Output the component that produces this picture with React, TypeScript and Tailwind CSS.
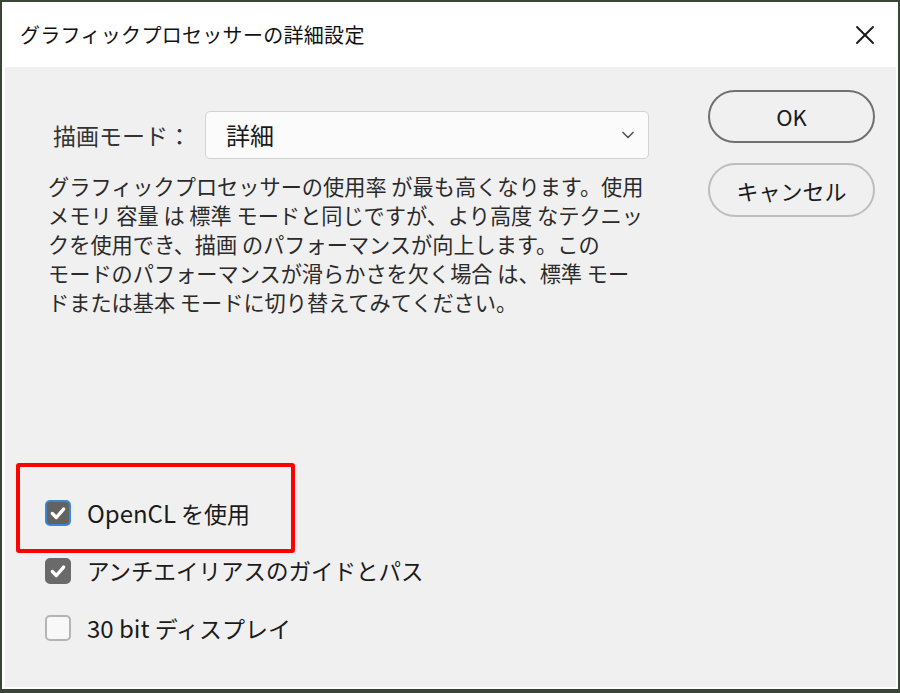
import { ChevronDown, X } from "lucide-react";

const jp = { fontFamily: '"Noto Sans CJK JP", "Noto Sans", sans-serif' };

function Checkbox({ checked, focused }: { checked: boolean; focused?: boolean }) {
	if (!checked) {
		return <div className="w-[26px] h-[26px] rounded-[5px] border-2 border-[#b4b4b4] bg-[#f8f8f8]" />;
	}
	return (
		<div
			className={
				focused
					? "w-[26px] h-[26px] rounded-[5px] border-2 border-[#3b86d8] bg-[#626262] flex items-center justify-center"
					: "w-[26px] h-[26px] rounded-[5px] border-2 border-[#6a6a6a] bg-[#6a6a6a] flex items-center justify-center"
			}
		>
			<svg width="18" height="18" viewBox="0 0 16 16" fill="none">
				<path d="M3 8.5 L6.5 12 L13 4.5" stroke="white" strokeWidth="3" strokeLinecap="round" strokeLinejoin="round" />
			</svg>
		</div>
	);
}

export default function App() {
	const lines = [
		"グラフィックプロセッサーの使用率 が最も高くなります。使用",
		"メモリ 容量 は 標準 モードと同じですが、より高度 なテクニッ",
		"クを使用でき、描画 のパフォーマンスが向上します。この",
		"モードのパフォーマンスが滑らかさを欠く場合 は、標準 モー",
		"ドまたは基本 モードに切り替えてみてください。",
	];

	return (
		<div className="relative w-[900px] h-[693px] bg-white border-x-[2px] border-t-[2px] border-b-[4px] border-[#3a4439] flex flex-col" style={jp}>
			{/* title bar */}
			<div className="h-[65px] shrink-0 flex items-center justify-between pl-[18px] pr-[17px]">
				<div className="text-[20px] text-[#111] tracking-[0.3px]">グラフィックプロセッサーの詳細設定</div>
				<X size={32} strokeWidth={1.4} className="text-[#1a1a1a]" />
			</div>

			{/* body */}
			<div className="flex-1 ml-[3px] mr-[2px] mb-[2px] bg-[#f0f0f0] flex">
				<div className="w-[650px] pl-[43px] pt-[44px]">
					<div className="flex items-center">
						<div className="w-[157px] pl-[5px] text-[23px] text-[#333] whitespace-nowrap">描画モード：</div>
						<div className="w-[444px] h-[48px] rounded-[5px] border border-[#d2d2d2] bg-[#fbfbfb] flex items-center justify-between pl-[20px] pr-[10px]">
							<span className="text-[24px] text-[#1a1a1a]">詳細</span>
							<ChevronDown size={20} strokeWidth={2} className="text-[#555]" />
						</div>
					</div>
					<div className="mt-[12px] text-[21.2px] leading-[29px] text-[#2a2a2a]">
						{lines.map((l) => (
							<div key={l} className="whitespace-nowrap">{l}</div>
						))}
					</div>
					<div className="mt-[168px] -ml-[3px] flex flex-col">
						<div className="h-[58px] flex items-center gap-[16px]">
							<Checkbox checked focused />
							<span className="text-[23px] text-[#1a1a1a]"><span className="text-[24px]">OpenCL</span> を使用</span>
						</div>
						<div className="h-[57px] flex items-center gap-[16px]">
							<Checkbox checked />
							<span className="text-[22.5px] text-[#1a1a1a]">アンチエイリアスのガイドとパス</span>
						</div>
						<div className="h-[57px] flex items-center gap-[16px]">
							<Checkbox checked={false} />
							<span className="text-[23px] text-[#1a1a1a]"><span className="text-[24px]">30 bit</span> ディスプレイ</span>
						</div>
					</div>
				</div>
				<div className="pl-[53px] pt-[23px] flex flex-col gap-[20px]">
					<button className="w-[167px] h-[53px] rounded-full border-2 border-[#707070] text-[22px] text-[#1a1a1a]">OK</button>
					<button className="w-[167px] h-[54px] rounded-full border-2 border-[#bdbdbd] text-[22px] text-[#1a1a1a]">キャンセル</button>
				</div>
			</div>

			{/* annotation */}
			<div className="absolute left-[14px] top-[461px] w-[279px] h-[90px] border-[4px] border-[#ff0000] rounded-[3px]" />
		</div>
	);
}
